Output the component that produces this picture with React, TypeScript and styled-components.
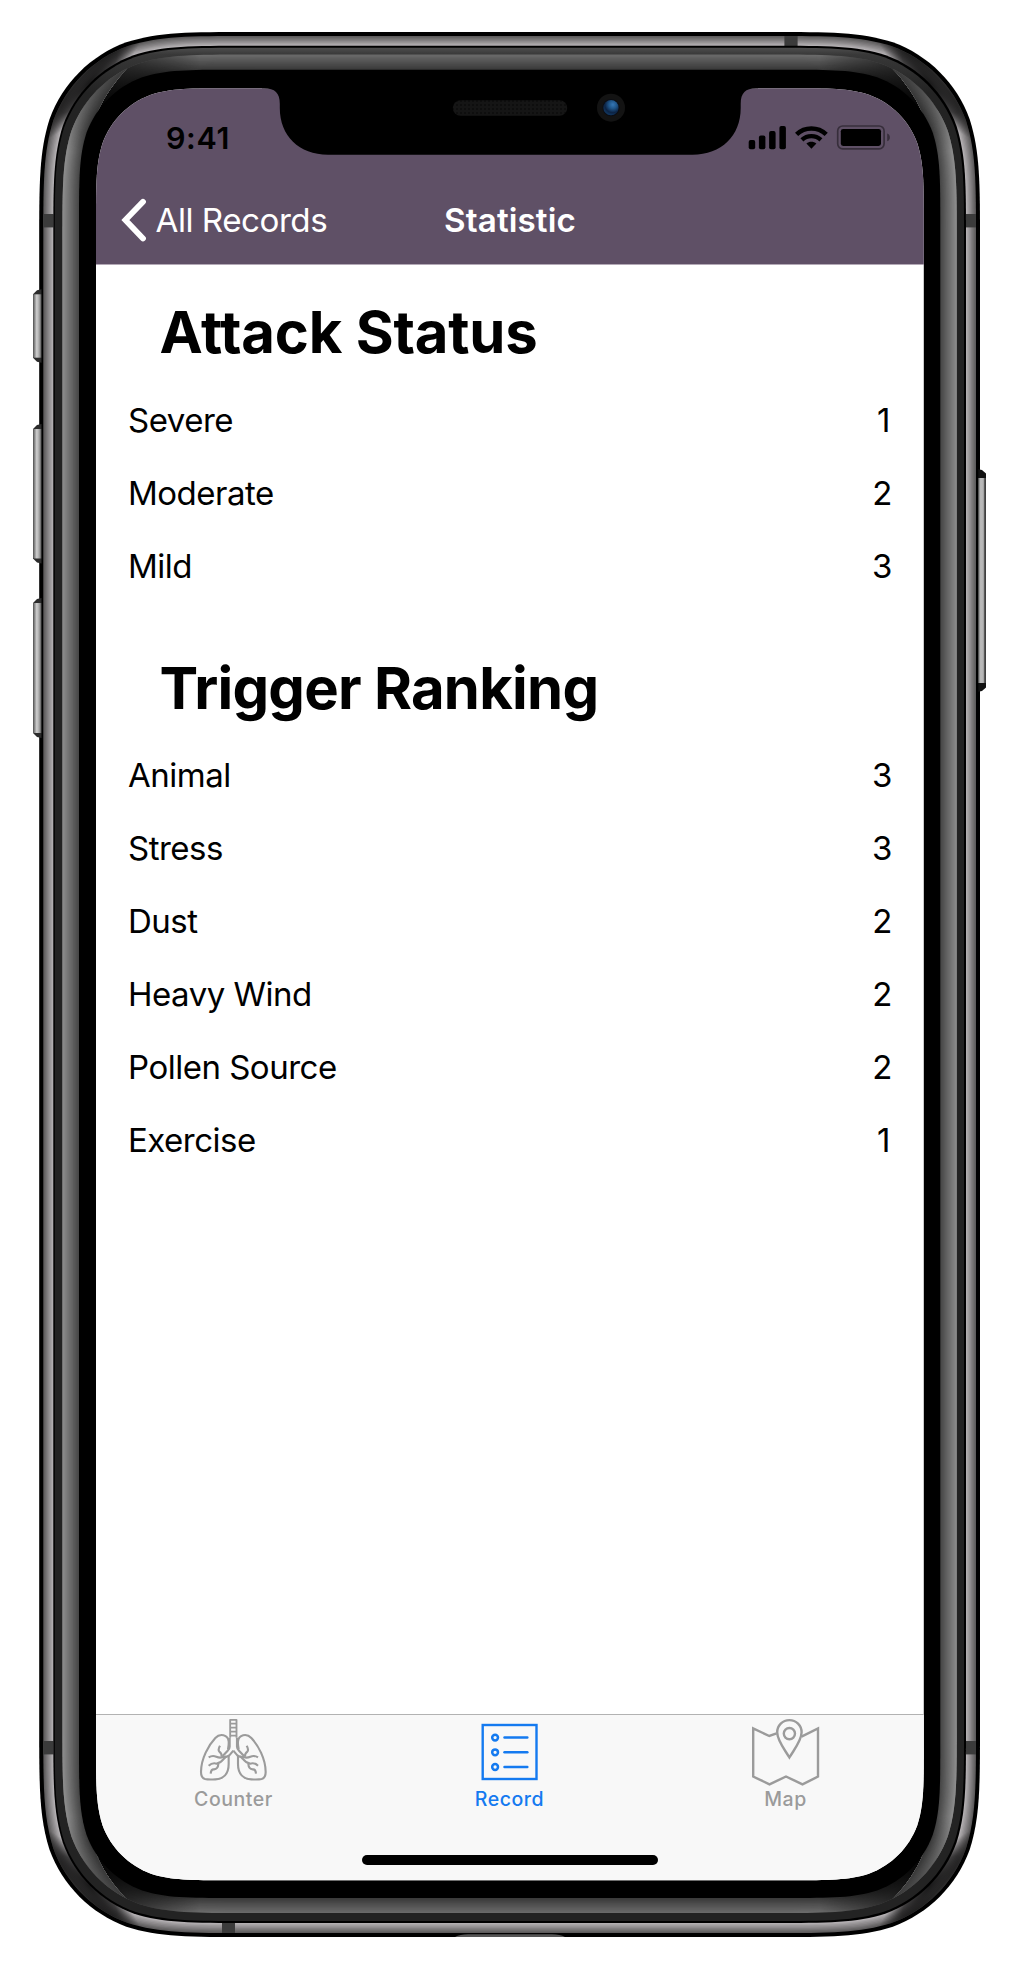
import React from "react";
import styled, { createGlobalStyle } from "styled-components";

const GlobalStyle = createGlobalStyle`
  * { box-sizing: border-box; }
  body { margin: 0; background: #ffffff; }
`;

/* ---------- geometry helpers ---------- */

/** Rectangle with continuous-curvature corners. */
function smoothRect(x0: number, y0: number, x1: number, y1: number, r: number): string {
  const corner = (cx: number, cy: number, sx: number, sy: number, flip: boolean) => {
    const pt = (a: number, b: number) => {
      const [u, v] = flip ? [b, a] : [a, b];
      return `${(cx + sx * u * r).toFixed(2)},${(cy + sy * v * r).toFixed(2)}`;
    };
    return [
      pt(0, 1.52866),
      `C${pt(0, 1.08849)} ${pt(0, 0.86841)} ${pt(0.07491, 0.63149)}`,
      `C${pt(0.16906, 0.37282)} ${pt(0.37282, 0.16906)} ${pt(0.63149, 0.07491)}`,
      `C${pt(0.86841, 0)} ${pt(1.08849, 0)} ${pt(1.52866, 0)}`,
    ].join(" ");
  };
  return (
    `M${corner(x0, y0, 1, 1, false)} L${corner(x1, y0, -1, 1, true)} ` +
    `L${corner(x1, y1, -1, -1, false)} L${corner(x0, y1, 1, -1, true)} Z`
  );
}

interface Ring {
  box: [number, number, number, number, number];
  tone: [number, number, number];
}

function blend(from: Ring, to: Ring, steps: number) {
  return Array.from({ length: steps }, (_, i) => {
    const t = i / steps;
    const mix = (a: number, b: number) => a + (b - a) * t;
    const b = from.box.map((v, k) => mix(v, to.box[k])) as Ring["box"];
    const c = from.tone.map((v, k) => Math.round(mix(v, to.tone[k])));
    return <path key={i} d={smoothRect(...b)} fill={`rgb(${c.join(",")})`} />;
  });
}

/* ---------- phone body ---------- */

const Device = styled.div`
  position: relative;
  width: 1019px;
  height: 1969px;
  padding: 88px 95px 88px 96px;
  overflow: hidden;
  font-family: Inter, "Liberation Sans", sans-serif;
`;

const Overlay = styled.svg`
  position: absolute;
  top: 0;
  left: 0;
  pointer-events: none;
`;

const METAL_OUT: Ring["box"] = [43.3, 36, 976, 1933, 134];
const METAL_IN: Ring["box"] = [53.3, 45.8, 966, 1923, 127];
const GLOSS_OUT: Ring["box"] = [62.4, 54.4, 956.8, 1913, 121];
const GLOSS_IN: Ring["box"] = [79, 69.7, 940.3, 1898, 100];

const corners: Array<[number, number, number, number]> = [
  [39, 32, 1, 1],
  [980, 32, -1, 1],
  [39, 1937, 1, -1],
  [980, 1937, -1, -1],
];

function Body() {
  return (
    <Overlay width="1019" height="1969" viewBox="0 0 1019 1969" aria-hidden>
      <defs>
        <clipPath id="metal">
          <path d={smoothRect(...METAL_OUT)} />
        </clipPath>
        <clipPath id="gloss">
          <path d={smoothRect(...GLOSS_OUT)} />
        </clipPath>
        <clipPath id="sides">
          <path d="M0,60 H120 L127,69 C102,94 82,134 79,190 V1778 C82,1836 102,1875 127,1899 L120,1960 H0Z" />
          <path d="M1019,60 H900 L892.5,69 C917.5,94 937.5,134 940.3,190 V1778 C937.5,1836 917.5,1875 892.5,1899 L900,1960 H1019Z" />
        </clipPath>
        <radialGradient id="cornerShade">
          <stop offset="0" stopColor="#000" stopOpacity="0.85" />
          <stop offset="0.5" stopColor="#000" stopOpacity="0.65" />
          <stop offset="1" stopColor="#000" stopOpacity="0" />
        </radialGradient>
        <linearGradient id="fadeL" x1="0" x2="1">
          <stop offset="0" stopColor="#000" />
          <stop offset="0.3" stopColor="#000" stopOpacity="0.9" />
          <stop offset="1" stopColor="#000" stopOpacity="0" />
        </linearGradient>
        <linearGradient id="fadeR" x1="1" x2="0">
          <stop offset="0" stopColor="#000" />
          <stop offset="0.3" stopColor="#000" stopOpacity="0.9" />
          <stop offset="1" stopColor="#000" stopOpacity="0" />
        </linearGradient>
        <linearGradient id="tipTop" x1="0" x2="0" y1="0" y2="1">
          <stop offset="0" stopColor="#000" stopOpacity="0.65" />
          <stop offset="0.5" stopColor="#000" stopOpacity="0.3" />
          <stop offset="1" stopColor="#000" stopOpacity="0" />
        </linearGradient>
        <linearGradient id="tipBottom" x1="0" x2="0" y1="1" y2="0">
          <stop offset="0" stopColor="#000" stopOpacity="0.65" />
          <stop offset="0.5" stopColor="#000" stopOpacity="0.3" />
          <stop offset="1" stopColor="#000" stopOpacity="0" />
        </linearGradient>
        <linearGradient id="ringTop" x1="0" x2="0" y1="47" y2="200" gradientUnits="userSpaceOnUse">
          <stop offset="0" stopColor="#505050" />
          <stop offset="0.05" stopColor="#383838" />
          <stop offset="0.3" stopColor="#232323" />
          <stop offset="1" stopColor="#232323" />
        </linearGradient>
        <linearGradient id="keyLeft" x1="0" x2="1">
          <stop offset="0" stopColor="#4c4c4c" />
          <stop offset="0.2" stopColor="#8a8a8a" />
          <stop offset="0.45" stopColor="#d0d0d0" />
          <stop offset="0.75" stopColor="#a4a4a4" />
          <stop offset="1" stopColor="#585858" />
        </linearGradient>
        <linearGradient id="keyRight" x1="0" x2="1">
          <stop offset="0" stopColor="#6c6c6c" />
          <stop offset="0.3" stopColor="#bcbcbc" />
          <stop offset="0.65" stopColor="#b4b4b4" />
          <stop offset="0.8" stopColor="#5a5a5a" />
          <stop offset="1" stopColor="#333" />
        </linearGradient>
      </defs>

      <path d={smoothRect(39.2, 32, 980, 1937, 138)} fill="#000" />
      {blend({ box: METAL_OUT, tone: [94, 92, 93] }, { box: METAL_IN, tone: [190, 186, 189] }, 8)}
      <g clipPath="url(#metal)">
        {corners.map(([cx, cy, sx, sy], i) => (
          <ellipse
            key={i}
            cx={cx + sx * 50}
            cy={cy + sy * 51}
            rx="80"
            ry="17"
            transform={`rotate(${-47 * sx * sy} ${cx + sx * 50} ${cy + sy * 51})`}
            fill="url(#cornerShade)"
          />
        ))}
      </g>
      <g fill="#3b3b3b">
        <rect x="784.4" y="36" width="13.2" height="10" />
        <rect x="222" y="1923" width="13" height="10" />
        <rect x="43.4" y="214" width="10" height="13.4" />
        <rect x="966" y="214" width="10" height="13.4" />
        <rect x="43.4" y="1741" width="10" height="13.4" />
        <rect x="966" y="1741" width="10" height="13.4" />
      </g>
      <path d={smoothRect(...METAL_IN)} fill="#000" />
      <path d={smoothRect(54.8, 47.8, 964, 1921, 126)} fill="url(#ringTop)" />

      {blend({ box: GLOSS_OUT, tone: [106, 106, 106] }, { box: GLOSS_IN, tone: [54, 54, 54] }, 12)}
      <g clipPath="url(#gloss)">
        <rect x="60" y="50" width="140" height="60" fill="url(#fadeL)" />
        <rect x="819" y="50" width="140" height="60" fill="url(#fadeR)" />
        <rect x="60" y="1858" width="140" height="60" fill="url(#fadeL)" />
        <rect x="819" y="1858" width="140" height="60" fill="url(#fadeR)" />
      </g>
      <g clipPath="url(#sides)">
        {blend({ box: GLOSS_OUT, tone: [140, 140, 140] }, { box: GLOSS_IN, tone: [66, 66, 66] }, 14)}
        <g clipPath="url(#gloss)">
          <rect x="60" y="62" width="900" height="90" fill="url(#tipTop)" />
          <rect x="60" y="1816" width="900" height="90" fill="url(#tipBottom)" />
        </g>
      </g>
      <path d={smoothRect(...GLOSS_IN)} fill="#000" />

      {[
        [289.3, 362.7],
        [424, 563.5],
        [598, 738],
      ].map(([a, b]) => (
        <g key={a}>
          <path d={`M41.5,${a} L37,${a + 1} L33,${a + 5} V${b - 5} L37,${b - 1} L41.5,${b}Z`} fill="#2b2b2b" />
          <rect x="33" y={a + 5} width="8.3" height={b - a - 10} fill="url(#keyLeft)" />
        </g>
      ))}
      <path d="M978.3,469.3 L982,470 L986,473.5 V687.5 L982,691 L978.3,691.8Z" fill="#111" />
      <rect x="978.3" y="478" width="7.7" height="205" fill="url(#keyRight)" />
      <path d="M455,1937 Q460,1934.3 468,1934.3 H552 Q560,1934.3 565,1937Z" fill="#555" />
    </Overlay>
  );
}

function Notch() {
  return (
    <Overlay width="1019" height="200" viewBox="0 0 1019 200" aria-hidden>
      <defs>
        <pattern id="mesh" width="4" height="4" patternUnits="userSpaceOnUse">
          <rect width="4" height="4" fill="#151515" />
          <rect width="2" height="2" fill="#0e0e0e" />
        </pattern>
        <radialGradient id="lens" cx="0.62" cy="0.3" r="0.75">
          <stop offset="0" stopColor="#3577b6" />
          <stop offset="0.35" stopColor="#1f5589" />
          <stop offset="0.7" stopColor="#0c2344" />
          <stop offset="1" stopColor="#123c68" />
        </radialGradient>
      </defs>
      <path
        d="M262,84 V88.3 H264 C275,88.3 279.8,93 279.8,104 V108 C279.8,136 299,154.7 328,154.7 H692.5 C721.5,154.7 740.7,136 740.7,108 V104 C740.7,93 745.5,88.3 756,88.3 H758 V84Z"
        fill="#000"
      />
      <rect x="452.8" y="100.2" width="114.4" height="15.6" rx="7.8" fill="url(#mesh)" />
      <circle cx="611" cy="107.7" r="14" fill="#131313" />
      <circle cx="611" cy="107.7" r="8.6" fill="#0b0d14" />
      <circle cx="611" cy="107.7" r="7.6" fill="url(#lens)" />
    </Overlay>
  );
}

/* ---------- screen ---------- */

const Screen = styled.main`
  display: flex;
  flex-direction: column;
  width: 828px;
  height: 1792.5px;
  background: #ffffff;
  clip-path: path("${smoothRect(0, 0.3, 827.8, 1792.3, 87)}");
`;

const Header = styled.header`
  height: 177px;
  background: #5f5066;
  border-bottom: 1px solid #b3a9b6;
`;

const StatusBar = styled.div`
  display: flex;
  justify-content: space-between;
  align-items: flex-start;
  height: 88px;
  padding: 37px 31px 0 70px;
`;

const Clock = styled.time`
  height: 28px;
  margin-top: -1px;
  font-size: 30.5px;
  font-weight: 600;
  line-height: 28px;
  letter-spacing: 0.6px;
  color: #000000;
`;

const NavBar = styled.nav`
  display: grid;
  grid-template-columns: 1fr auto 1fr;
  align-items: center;
  height: 88px;
  color: #ffffff;
`;

const Back = styled.a`
  display: flex;
  align-items: center;
  gap: 9.5px;
  padding-left: 25px;
  font-size: 33.2px;
  letter-spacing: -0.5px;
  line-height: 40px;
`;

const Title = styled.h1`
  margin: 0;
  font-size: 33.2px;
  font-weight: 600;
  letter-spacing: 0.1px;
  line-height: 40px;
`;

const Content = styled.div`
  flex: 1;
  padding: 23px 32px 0;
`;

const Section = styled.section`
  margin-bottom: 41.5px;
`;

const Heading = styled.h2<{ $tracking: number }>`
  display: flex;
  align-items: center;
  height: 95px;
  margin: 0;
  padding: 0 0 7px 31.5px;
  font-size: 58px;
  font-weight: 700;
  font-variant-ligatures: none;
  letter-spacing: ${(p) => p.$tracking}px;
  color: #000000;
`;

const Row = styled.div`
  display: flex;
  justify-content: space-between;
  align-items: center;
  height: 73px;
  font-size: 33px;
  letter-spacing: -0.5px;
  color: #000000;
`;

const Count = styled.span<{ $inset: number }>`
  margin-right: ${(p) => p.$inset}px;
`;

const TabBar = styled.footer`
  height: 166.5px;
  border-top: 1px solid #b2b2b2;
  background: #f8f8f8;
`;

const Tabs = styled.div`
  display: grid;
  grid-template-columns: repeat(3, 1fr);
  height: 140px;
`;

const Tab = styled.div<{ $active?: boolean }>`
  display: flex;
  flex-direction: column;
  align-items: center;
  color: ${(p) => (p.$active ? "#147af0" : "#9b9b9b")};
`;

const TabIcon = styled.span`
  display: flex;
  width: 70px;
  height: 71px;
  justify-content: center;
`;

const TabLabel = styled.span`
  margin-top: 0.5px;
  padding-right: 1px;
  font-size: 19.5px;
  font-weight: 500;
  line-height: 24px;
  letter-spacing: 0.55px;
`;

const HomeIndicator = styled.div`
  width: 296px;
  height: 10px;
  margin: 0 auto;
  border-radius: 5px;
  background: #000000;
`;

/* ---------- icons ---------- */

const StatusIcons = () => (
  <svg width="146" height="28" viewBox="747 125 146 28" aria-hidden>
    <rect x="748.7" y="140" width="6.5" height="9.2" rx="1.9" />
    <rect x="758.9" y="135.6" width="6.5" height="13.6" rx="1.9" />
    <rect x="769.1" y="131" width="6.5" height="18.2" rx="1.9" />
    <rect x="779.4" y="126" width="6.5" height="23.2" rx="1.9" />
    <path d="M796.6,134.4 C804.9,126.6 817.9,126.6 826.2,134.4" fill="none" stroke="#000" strokeWidth="4.6" />
    <path d="M801.9,139.8 C807.2,134.9 815.6,134.9 820.9,139.8" fill="none" stroke="#000" strokeWidth="4.4" />
    <path d="M811.4,148.7 L806.4,143.6 C809.2,141 813.6,141 816.4,143.6Z" />
    <rect x="837.7" y="126" width="46.4" height="22.8" rx="5" fill="none" stroke="#000" strokeOpacity="0.42" strokeWidth="1.7" />
    <rect x="840.8" y="128.9" width="40.2" height="17.1" rx="2.4" />
    <path d="M887.2,133.5 C890.8,134.6 890.8,140.2 887.2,141.3Z" fillOpacity="0.42" />
  </svg>
);

const Chevron = () => (
  <svg width="25" height="44" viewBox="121 198 25 44" fill="none" aria-hidden>
    <path d="M143,201.8 L125.4,220.1 L143,238.4" stroke="#fff" strokeWidth="5.8" strokeLinecap="round" strokeLinejoin="miter" />
  </svg>
);

const LungHalf = () => (
  <>
    <path d="M629,113 V140 Q629,146 623,152 L608,168" />
    <path d="M626,166 V192 C626,222 610,237 586,238 C572,239 564,239 555,237 Q543,234 543,216 C543,176 566,135 586,114 C600,99 624,104 626,124 C627,132 625,140 624,148" />
    <path d="M640,152 L628,166 Q620,172 606,171" />
    <path d="M600,137 Q593,149 598,155 Q606,161 605,170" />
    <path d="M566,172 Q577,165 589,170 Q600,175 608,171" />
    <path d="M566,197 Q577,187 590,191 Q602,189 612,176 L620,168" />
    <path d="M572,221 Q573,207 582,208 Q594,207 595,192" />
  </>
);

const LungsIcon = () => (
  <svg width="70" height="72" viewBox="537 45 210 216" fill="none" stroke="currentColor" strokeWidth="6.4" strokeLinejoin="round" aria-hidden>
    <path d="M630.5,113 V59.5 H649.5 V113 M630,71 H650 M630,83 H650 M630,95 H650 M630,107 H650" strokeWidth="5.6" />
    <LungHalf />
    <g transform="translate(1280 0) scale(-1 1)">
      <LungHalf />
    </g>
  </svg>
);

const RecordIcon = () => (
  <svg width="70" height="72" viewBox="474.5 1715 70 72" fill="none" stroke="currentColor" strokeWidth="2.4" aria-hidden>
    <rect x="482.2" y="1725" width="53.8" height="54" />
    {[1737.6, 1752.3, 1767].map((y) => (
      <g key={y}>
        <circle cx="494.6" cy={y} r="2.9" strokeWidth="2.5" />
        <path d={`M504,${y} H526.8`} strokeLinecap="round" strokeWidth="2.5" />
      </g>
    ))}
  </svg>
);

const MapIcon = () => (
  <svg width="70" height="72" viewBox="751 1715 70 72" fill="none" stroke="currentColor" strokeWidth="2.4" aria-hidden>
    <path d="M776.6,1733.3 L769.3,1736 L753.2,1728.5 V1776.6 L769.5,1784.3 L786,1776.5 L802.5,1784.3 L818,1776.6 V1728.5 L801.5,1736.6" />
    <path d="M789.4,1757.5 C784,1748.5 777.2,1740.5 777.2,1732.3 C777.2,1725.5 782.6,1720.1 789.4,1720.1 C796.2,1720.1 801.6,1725.5 801.6,1732.3 C801.6,1740.5 794.8,1748.5 789.4,1757.5Z" />
    <circle cx="789.4" cy="1733.6" r="5.6" />
  </svg>
);

/* ---------- data ---------- */

interface Entry {
  label: string;
  count: number;
}

const sections: Array<{ title: string; tracking: number; rows: Entry[] }> = [
  {
    title: "Attack Status",
    tracking: -0.2,
    rows: [
      { label: "Severe", count: 1 },
      { label: "Moderate", count: 2 },
      { label: "Mild", count: 3 },
    ],
  },
  {
    title: "Trigger Ranking",
    tracking: -0.75,
    rows: [
      { label: "Animal", count: 3 },
      { label: "Stress", count: 3 },
      { label: "Dust", count: 2 },
      { label: "Heavy Wind", count: 2 },
      { label: "Pollen Source", count: 2 },
      { label: "Exercise", count: 1 },
    ],
  },
];

export default function App() {
  return (
    <>
      <GlobalStyle />
      <Device>
        <Body />
        <Screen>
          <Header>
            <StatusBar>
              <Clock>9:41</Clock>
              <StatusIcons />
            </StatusBar>
            <NavBar>
              <Back>
                <Chevron />
                All Records
              </Back>
              <Title>Statistic</Title>
            </NavBar>
          </Header>
          <Content>
            {sections.map((s) => (
              <Section key={s.title}>
                <Heading $tracking={s.tracking}>{s.title}</Heading>
                {s.rows.map(({ label, count }) => (
                  <Row key={label}>
                    <span>{label}</span>
                    <Count $inset={count === 1 ? 2 : 0}>{count}</Count>
                  </Row>
                ))}
              </Section>
            ))}
          </Content>
          <TabBar>
            <Tabs>
              <Tab>
                <TabIcon><LungsIcon /></TabIcon>
                <TabLabel>Counter</TabLabel>
              </Tab>
              <Tab $active>
                <TabIcon><RecordIcon /></TabIcon>
                <TabLabel>Record</TabLabel>
              </Tab>
              <Tab>
                <TabIcon><MapIcon /></TabIcon>
                <TabLabel>Map</TabLabel>
              </Tab>
            </Tabs>
            <HomeIndicator />
          </TabBar>
        </Screen>
        <Notch />
      </Device>
    </>
  );
}
